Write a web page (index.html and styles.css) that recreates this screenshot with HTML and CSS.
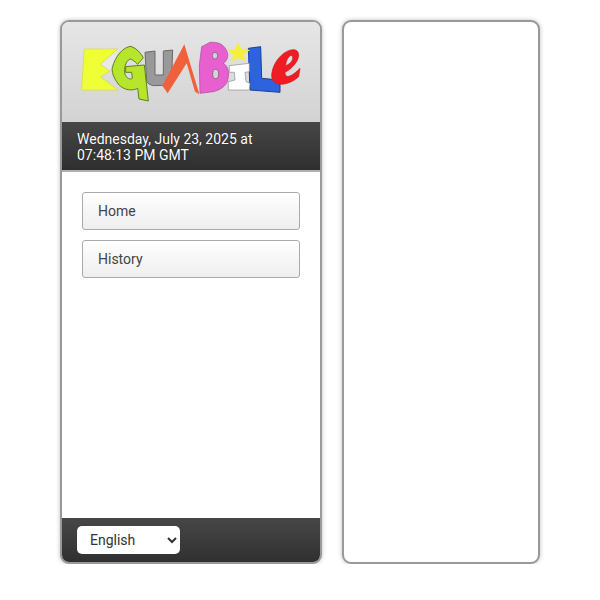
FILE: index.html
```html
<!DOCTYPE html>
<html lang="en">
<head>
<meta charset="utf-8">
<title>Egumbile</title>
<link rel="stylesheet" href="styles.css">
</head>
<body>
<div class="layout">
  <aside class="panel side">
    <header class="brand">
      <svg class="logo" viewBox="0 0 720 225" role="img" aria-label="Egumbile logo">
        <polygon fill="#e9e9e9" points="128,44 76,88 105,108 122,70"/>
        <polygon fill="#efff36" stroke="#d5dc30" stroke-width="2" points="28,42 128,42 76,88 105,108 76,125 128,165 20,165"/>
        <path fill="#999" stroke="#6a6a6a" stroke-width="3" stroke-linejoin="round" d="M210,52 L240,48 L240,120 L265,120 L265,48 L293,45 L290,125 C285,140 275,150 265,151 L235,152 C225,150 218,145 215,140 Z"/>
        <path fill="#b6e52c" stroke="#5f7f22" stroke-width="3" stroke-linejoin="round" d="M112,98 C120,65 145,35 168,34 C185,40 198,55 205,68 L188,88 C178,78 170,72 165,72 C152,78 146,100 150,118 C155,130 165,135 172,130 L170,112 L152,112 L152,95 L208,90 L220,198 L192,192 L188,160 C165,172 135,160 125,140 C115,125 110,110 112,98 Z"/>
        <polygon fill="#f0603a" points="262,152 328,28 373,178 360,170 335,85 278,175"/>
        <g transform="translate(345)">
          <path fill="#e85fd0" stroke="#a34d94" stroke-width="2" d="M35,35 L60,22 C85,20 105,28 113,55 C115,70 108,80 100,85 C115,95 120,110 112,140 C105,155 90,165 70,170 L30,175 L28,90 Z"/>
          <ellipse fill="#d8d0d8" stroke="#70506c" stroke-width="2" cx="75" cy="62" rx="8" ry="10"/>
          <ellipse fill="#d8d0d8" stroke="#70506c" stroke-width="2" cx="77" cy="117" rx="9" ry="14"/>
          <polygon fill="#2d63dc" stroke="#1b3f9c" stroke-width="3" points="175,40 212,35 215,130 270,135 270,172 180,165"/>
          <polygon fill="#ffffff" stroke="#8c8c8c" stroke-width="2" points="118,92 178,85 178,110 165,112 168,140 180,145 178,165 115,165 115,140 135,135 133,112 118,112"/>
          <polygon fill="#f4ee3c" points="145,22 155,42 180,45 160,60 167,78 145,70 125,78 130,60 112,42 135,42"/>
          <path fill="#f01c24" stroke="#d01820" stroke-width="2" fill-rule="evenodd" d="M245,125 C245,80 285,42 312,44 C335,46 332,85 285,112 C285,130 300,130 330,100 L326,125 C300,150 250,160 245,125 Z M287,92 C305,85 312,70 306,62 C298,58 288,75 287,92 Z"/>
        </g>
      </svg>
      <div class="clock">Wednesday, July 23, 2025 at 07:48:13 PM GMT</div>
    </header>
    <nav class="menu">
      <a class="menu-item" href="#">Home</a>
      <a class="menu-item" href="#">History</a>
    </nav>
    <footer class="foot">
      <select class="lang" aria-label="Language">
        <option>English</option>
      </select>
    </footer>
  </aside>
  <main class="panel content"></main>
</div>
</body>
</html>
```
FILE: styles.css
```css
html, body {
  margin: 0;
  padding: 0;
  background: #fff;
}
body {
  font-family: Roboto, "Liberation Sans", sans-serif;
}
.layout {
  display: flex;
  gap: 20px;
  padding: 20px 0 0 60px;
  height: 544px;
}
.panel {
  box-sizing: border-box;
  border: 2px solid #999;
  border-radius: 9px;
  box-shadow: 0 0 4px rgba(0, 0, 0, 0.25);
  background: #fff;
  overflow: hidden;
}
.side {
  width: 262px;
  display: flex;
  flex-direction: column;
}
.content {
  width: 198px;
}
.brand {
  background: linear-gradient(#e6e6e6, #c9c9c9);
}
.logo {
  display: block;
  width: 240px;
  height: 75px;
  margin: 13px 0 12px 13px;
}
.clock {
  box-sizing: border-box;
  height: 50px;
  padding: 9px 15px 0;
  background: linear-gradient(#474747, #2f2f2f);
  border-bottom: 2px solid #b0b0b0;
  color: #fff;
  font-size: 14px;
  line-height: 16px;
  text-shadow: 0 0 1px rgba(0, 0, 0, 0.6);
}
.menu {
  flex: 1;
  display: flex;
  flex-direction: column;
  gap: 10px;
  padding: 20px 20px 0;
}
.menu-item {
  box-sizing: border-box;
  height: 38px;
  padding: 0 15px;
  display: flex;
  align-items: center;
  border: 1px solid #aaa;
  border-radius: 3px;
  background: linear-gradient(#fff, #eee);
  color: #444;
  font-size: 14px;
  text-decoration: none;
}
.foot {
  height: 44px;
  box-sizing: border-box;
  padding: 8px 15px 0;
  background: linear-gradient(#474747, #303030);
}
.lang {
  display: block;
  width: 103px;
  height: 28px;
  padding: 0 9px;
  border: 0;
  border-radius: 5px;
  background: #fff;
  color: #333;
  font-family: inherit;
  font-size: 14px;
}
```
